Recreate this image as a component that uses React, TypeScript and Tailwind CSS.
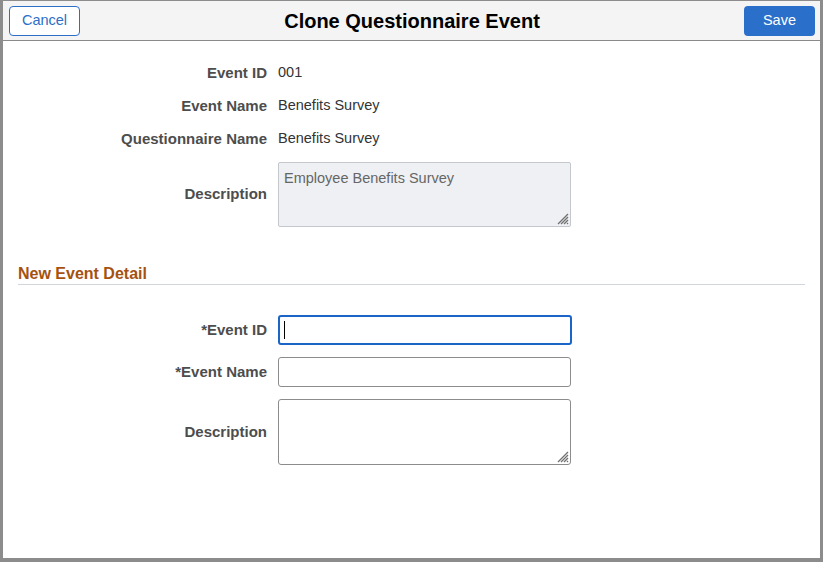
import React from "react";

const labelCls = "w-[264px] shrink-0 text-right text-[15px] font-bold text-[#4d4d4d]";

function ReadRow({ label, value }: { label: string; value: string }) {
  return (
    <div className="flex h-[33px] items-center pt-px">
      <div className={labelCls}>{label}</div>
      <div className="ml-[11px] text-[14.5px] text-[#333333]">{value}</div>
    </div>
  );
}

// hatched grip drawn in the textarea corner
function Grip() {
  return (
    <svg className="pointer-events-none absolute bottom-[2px] right-[2px]" width="12" height="12" viewBox="0 0 12 12">
      <g stroke="#6f6f6f" strokeWidth="1.2">
        <line x1="11" y1="1" x2="1" y2="11" />
        <line x1="11" y1="4" x2="4" y2="11" />
        <line x1="11" y1="7" x2="7" y2="11" />
        <line x1="11" y1="10" x2="10" y2="11" />
      </g>
    </svg>
  );
}

export default function App() {
  return (
    <div
      className="flex h-[562px] w-[823px] flex-col overflow-hidden border-t border-l-[3px] border-r-[3px] border-b-[4px] border-[#8c8c8c] bg-white"
      style={{ fontFamily: '"Liberation Sans", Arial, sans-serif' }}
    >
      {/* header bar */}
      <div className="flex h-[40px] shrink-0 items-center justify-between border-b border-[#8a8a8a] bg-[#f4f4f4] pl-[6px] pr-[5px]">
        <button className="flex h-[30px] w-[71px] items-center justify-center rounded-[4px] border border-[#2d6fc7] bg-white text-[14.5px] text-[#2d6fc7]">
          Cancel
        </button>
        <div className="text-[20px] font-bold text-black">Clone Questionnaire Event</div>
        <button className="flex h-[30px] w-[71px] items-center justify-center rounded-[4px] bg-[#2a6fc9] text-[14.5px] text-white">
          Save
        </button>
      </div>

      <div className="flex flex-col pt-[15px]">
        <ReadRow label="Event ID" value="001" />
        <ReadRow label="Event Name" value="Benefits Survey" />
        <ReadRow label="Questionnaire Name" value="Benefits Survey" />
        <div className="mt-[7px] flex items-center">
          <div className={labelCls}>Description</div>
          <div className="relative ml-[11px]">
            <textarea
              disabled
              defaultValue="Employee Benefits Survey"
              className="block h-[65px] w-[293px] resize-none rounded-[2px] border border-[#c4c7cc] bg-[#eef0f3] px-[5px] py-[7px] text-[14.5px] leading-[16px] text-[#666666] outline-none"
            />
            <Grip />
          </div>
        </div>

        <div className="mx-[15px] mt-[38px] border-b border-[#d0d6dc] pb-[1px]">
          <div className="text-[16px] font-bold leading-[18px] text-[#a5520f]">New Event Detail</div>
        </div>

        <div className="mt-[30px] flex items-center">
          <div className={labelCls}>*Event ID</div>
          <div className="relative ml-[11px]">
            <input
              type="text"
              className="block h-[30px] w-[294px] rounded-[3px] border-2 border-[#1b64c8] px-[5px] text-[14px] caret-transparent outline-none"
            />
            <span className="absolute left-[6px] top-[6px] h-[18px] w-px bg-black" />
          </div>
        </div>
        <div className="mt-[12px] flex items-center">
          <div className={labelCls}>*Event Name</div>
          <input
            type="text"
            className="ml-[11px] block h-[30px] w-[293px] rounded-[3px] border border-[#8c8c8c] px-[5px] text-[14px] outline-none"
          />
        </div>
        <div className="mt-[12px] flex items-center">
          <div className={labelCls}>Description</div>
          <div className="relative ml-[11px]">
            <textarea className="block h-[66px] w-[293px] resize-none rounded-[3px] border border-[#8c8c8c] px-[5px] py-[5px] text-[14px] outline-none" />
            <Grip />
          </div>
        </div>
      </div>
    </div>
  );
}
